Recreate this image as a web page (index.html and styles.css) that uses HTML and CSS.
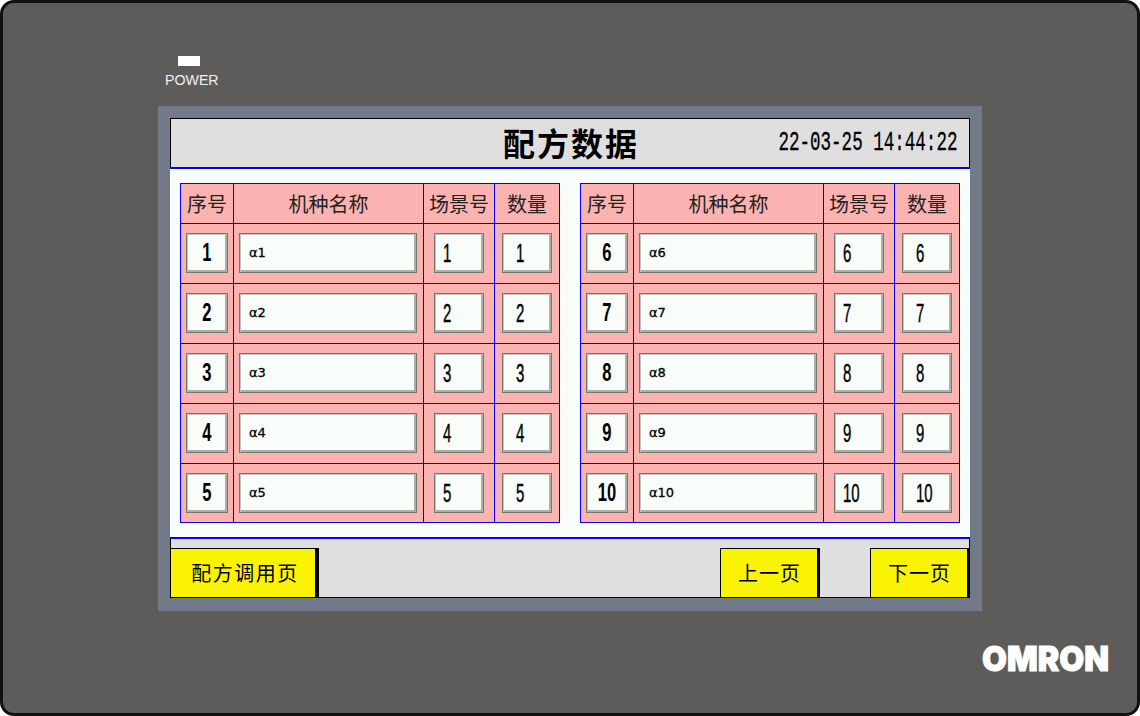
FILE: index.html
```html
<!DOCTYPE html>
<html lang="zh">
<head>
<meta charset="utf-8">
<title>配方数据</title>
<link rel="stylesheet" href="styles.css">
</head>
<body>
<div class="bezel">
  <div class="power">
    <div class="led"></div>
    <div class="power-label">POWER</div>
  </div>
  <div class="frame">
    <div class="screen">
      <header class="head">
        <span></span>
        <h1 class="title">配方数据</h1>
        <span class="clock">22-03-25 14:44:22</span>
      </header>
      <main class="body">
        <div class="tbl">
          <div class="cell hd">序号</div><div class="cell hd">机种名称</div><div class="cell hd">场景号</div><div class="cell hd last">数量</div>
          <div class="cell c1"><div class="box n"><span class="dig">1</span></div></div><div class="cell c2"><div class="box name">α1</div></div><div class="cell c3"><div class="box v3"><span class="dig reg">1</span></div></div><div class="cell c4 last"><div class="box v4"><span class="dig reg">1</span></div></div>
          <div class="cell c1"><div class="box n"><span class="dig">2</span></div></div><div class="cell c2"><div class="box name">α2</div></div><div class="cell c3"><div class="box v3"><span class="dig reg">2</span></div></div><div class="cell c4 last"><div class="box v4"><span class="dig reg">2</span></div></div>
          <div class="cell c1"><div class="box n"><span class="dig">3</span></div></div><div class="cell c2"><div class="box name">α3</div></div><div class="cell c3"><div class="box v3"><span class="dig reg">3</span></div></div><div class="cell c4 last"><div class="box v4"><span class="dig reg">3</span></div></div>
          <div class="cell c1"><div class="box n"><span class="dig">4</span></div></div><div class="cell c2"><div class="box name">α4</div></div><div class="cell c3"><div class="box v3"><span class="dig reg">4</span></div></div><div class="cell c4 last"><div class="box v4"><span class="dig reg">4</span></div></div>
          <div class="cell c1 end"><div class="box n"><span class="dig">5</span></div></div><div class="cell c2 end"><div class="box name">α5</div></div><div class="cell c3 end"><div class="box v3"><span class="dig reg">5</span></div></div><div class="cell c4 last end"><div class="box v4"><span class="dig reg">5</span></div></div>
        </div>
        <div class="tbl">
          <div class="cell hd">序号</div><div class="cell hd">机种名称</div><div class="cell hd">场景号</div><div class="cell hd last">数量</div>
          <div class="cell c1"><div class="box n"><span class="dig">6</span></div></div><div class="cell c2"><div class="box name">α6</div></div><div class="cell c3"><div class="box v3"><span class="dig reg">6</span></div></div><div class="cell c4 last"><div class="box v4"><span class="dig reg">6</span></div></div>
          <div class="cell c1"><div class="box n"><span class="dig">7</span></div></div><div class="cell c2"><div class="box name">α7</div></div><div class="cell c3"><div class="box v3"><span class="dig reg">7</span></div></div><div class="cell c4 last"><div class="box v4"><span class="dig reg">7</span></div></div>
          <div class="cell c1"><div class="box n"><span class="dig">8</span></div></div><div class="cell c2"><div class="box name">α8</div></div><div class="cell c3"><div class="box v3"><span class="dig reg">8</span></div></div><div class="cell c4 last"><div class="box v4"><span class="dig reg">8</span></div></div>
          <div class="cell c1"><div class="box n"><span class="dig">9</span></div></div><div class="cell c2"><div class="box name">α9</div></div><div class="cell c3"><div class="box v3"><span class="dig reg">9</span></div></div><div class="cell c4 last"><div class="box v4"><span class="dig reg">9</span></div></div>
          <div class="cell c1 end"><div class="box n"><span class="dig">10</span></div></div><div class="cell c2 end"><div class="box name">α10</div></div><div class="cell c3 end"><div class="box v3"><span class="dig reg">10</span></div></div><div class="cell c4 last end"><div class="box v4"><span class="dig reg">10</span></div></div>
        </div>
      </main>
      <footer class="foot">
        <button class="btn wide">配方调用页</button>
        <div class="spacer"></div>
        <button class="btn">上一页</button>
        <button class="btn next">下一页</button>
      </footer>
    </div>
  </div>
  <div class="logo">
    <svg class="logo-svg" width="150" height="36" viewBox="0 0 150 36"><text class="logo-text" x="2" y="29" textLength="127" lengthAdjust="spacingAndGlyphs">OMRON</text></svg>
  </div>
</div>
</body>
</html>
```
FILE: styles.css
```css
* { box-sizing: border-box; }
html, body { margin: 0; padding: 0; background: #fff; }
body { width: 1140px; height: 716px; overflow: hidden; }

.bezel {
  width: 1140px;
  height: 716px;
  background: #5e5c5b;
  border: 3px solid #111;
  border-radius: 14px;
  padding: 53px 0 0 155px;
  overflow: hidden;
}

.power { height: 50px; }
.led { width: 22px; height: 10px; margin-left: 20px; background: #fff; }
.power-label {
  margin: 5px 0 0 7px;
  font: 14.2px/18px "Liberation Sans", Arial, sans-serif;
  color: #f0f0f0;
}

.frame {
  width: 824px;
  height: 505px;
  background: #727a8a;
  padding: 12px 12px 13px;
}
.screen {
  width: 800px;
  height: 480px;
  display: flex;
  flex-direction: column;
  background: #f8fdf9;
}

.head {
  height: 51px;
  flex: none;
  display: grid;
  grid-template-columns: 1fr auto 1fr;
  align-items: center;
  background: #dfdfdf;
  border: 1px solid #000;
  border-bottom: 2px solid #00f;
}
.title {
  margin: 0 0 2px 2px;
  font: 700 32px/40px "Noto Sans CJK SC", "Liberation Sans", sans-serif;
  letter-spacing: 2px;
  color: #000;
}
.clock {
  justify-self: end;
  margin-right: 12px;
  font: 400 27px/36px "Liberation Mono", monospace;
  color: #000;
  white-space: nowrap;
  transform: scaleX(0.65);
  transform-origin: right center;
  -webkit-text-stroke: 0.3px #000;
}

.body {
  height: 368px;
  flex: none;
  display: flex;
  gap: 20px;
  padding: 14px 10px 0;
}
.tbl {
  width: 380px;
  height: 340px;
  display: grid;
  grid-template-columns: 53px 190px 71px 64px;
  grid-template-rows: 40px 60px 60px 60px 60px 58px;
  border: 1px solid #00f;
  background: #fbb3b1;
}
.cell {
  border-right: 1px solid #00f;
  border-bottom: 1px solid #00f;
  padding-top: 9px;
}
.cell.last { border-right: 0; }
.cell.end { border-bottom: 0; }
.hd {
  padding-top: 0;
  display: flex;
  align-items: center;
  justify-content: center;
  font: 400 20px/24px "Noto Sans CJK SC", "Liberation Sans", sans-serif;
  color: #222;
}
.c1 { padding-left: 5px; }
.c2 { padding-left: 5px; }
.c3 { padding-left: 10px; }
.c4 { padding-left: 7px; }

.box {
  height: 40px;
  background: #f8fdf9;
  border: 1px solid #76766f;
  box-shadow: inset 1px 1px 0 #c4c4be, inset -2px -2px 0 #aeaea8;
  display: flex;
  align-items: center;
  color: #000;
}
.box.n { width: 42px; justify-content: center; }
.box.name {
  width: 178px;
  padding: 0 0 1px 9px;
  font: 400 13px/16px "DejaVu Sans", sans-serif;
  -webkit-text-stroke: 0.3px #000;
}
.box.v3 { width: 50px; padding-left: 8px; }
.box.v4 { width: 50px; padding-left: 13px; }

.dig {
  display: inline-block;
  font: 700 25px/30px "Liberation Sans", sans-serif;
  transform: scaleX(0.66);
  margin-bottom: 3px;
}
.dig.reg {
  font-weight: 400;
  transform: scaleX(0.6);
  transform-origin: left center;
  margin-bottom: 0;
  -webkit-text-stroke: 0.4px #000;
}

.foot {
  height: 61px;
  flex: none;
  display: flex;
  align-items: flex-end;
  background: #dfdfdf;
  border-top: 2px solid #00f;
  border-left: 1px solid #000;
  border-right: 1px solid #000;
  border-bottom: 1px solid #000;
}
.btn {
  width: 100px;
  height: 49px;
  margin: 0;
  padding: 0 0 0 1px;
  background: #fbf304;
  border: 1px solid #000;
  border-right-width: 3px;
  border-bottom: 0;
  border-radius: 0;
  font: 400 20px/24px "Noto Sans CJK SC", "Liberation Sans", sans-serif;
  letter-spacing: 1px;
  color: #000;
}
.btn.wide { width: 149px; margin-left: -1px; padding-left: 4px; border-right-width: 4px; letter-spacing: 1.5px; }
.next { margin-left: 50px; margin-right: -1px; }
.spacer { flex: 1; }

.logo { margin: 31px 0 0 822px; }
.logo-svg { display: block; }
.logo-text {
  font: 900 34px "Inter", "Liberation Sans", sans-serif;
  fill: #fff;
  stroke: #fff;
  stroke-width: 1px;
}
```
